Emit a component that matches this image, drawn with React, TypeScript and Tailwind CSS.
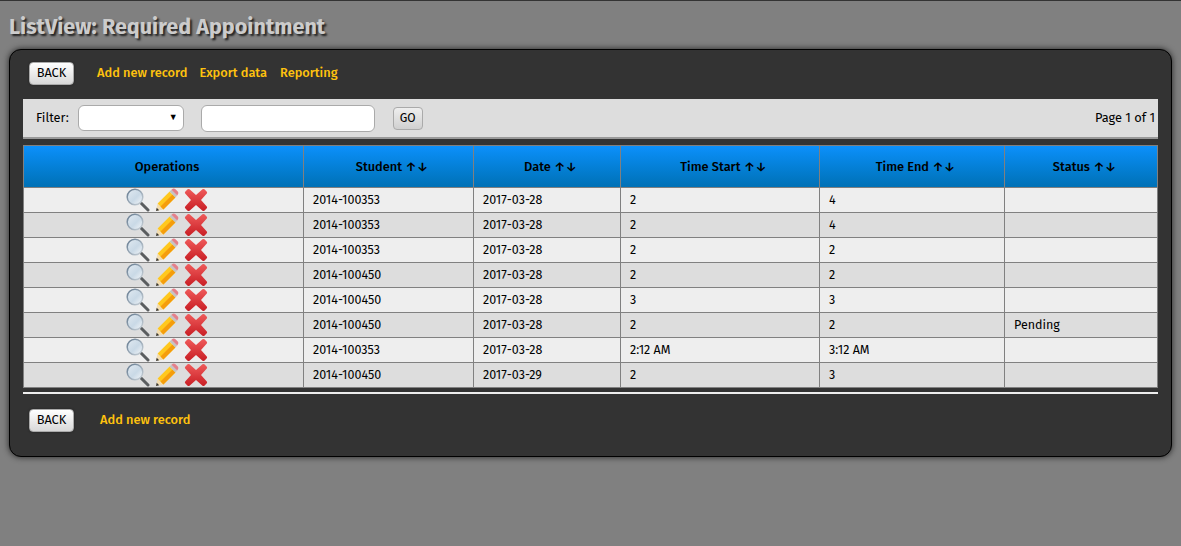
const font = "font-['Fira_Sans','Noto_Sans',sans-serif]";

const rows = [
  ["2014-100353", "2017-03-28", "2", "4", ""],
  ["2014-100353", "2017-03-28", "2", "4", ""],
  ["2014-100353", "2017-03-28", "2", "2", ""],
  ["2014-100450", "2017-03-28", "2", "2", ""],
  ["2014-100450", "2017-03-28", "3", "3", ""],
  ["2014-100450", "2017-03-28", "2", "2", "Pending"],
  ["2014-100353", "2017-03-28", "2:12 AM", "3:12 AM", ""],
  ["2014-100450", "2017-03-29", "2", "3", ""],
];

const columns = [
  { label: "Student", width: "w-[170px]" },
  { label: "Date", width: "w-[147px]" },
  { label: "Time Start", width: "w-[199px]" },
  { label: "Time End", width: "w-[185px]" },
  { label: "Status", width: "w-[153px]" },
];

function SearchIcon() {
  return (
    <svg width="24" height="24" viewBox="0 0 24 24" className="shrink-0">
      <defs>
        <linearGradient id="lens" x1="0" y1="0" x2="1" y2="1">
          <stop offset="0" stopColor="#e2eaf1" />
          <stop offset="0.55" stopColor="#c9d9e6" />
          <stop offset="1" stopColor="#f4f6f8" />
        </linearGradient>
        <linearGradient id="rim" x1="0" y1="0" x2="1" y2="1">
          <stop offset="0" stopColor="#62788e" />
          <stop offset="1" stopColor="#ccd4da" />
        </linearGradient>
      </defs>
      <path d="M15 15 L22 22" stroke="#5a5d5f" strokeWidth="3" strokeLinecap="round" />
      <circle cx="9" cy="9" r="7.8" fill="url(#lens)" stroke="url(#rim)" strokeWidth="1.5" />
    </svg>
  );
}

function PencilIcon() {
  return (
    <svg width="24" height="24" viewBox="0 0 24 24" className="shrink-0">
      <path d="M1 23 L2.6 15.6 L8.4 21.4 Z" fill="#f3dcae" />
      <path d="M1 23 L1.7 19.8 L4.2 22.3 Z" fill="#333" />
      <path d="M2.6 15.6 L14.6 3.6 L20.4 9.4 L8.4 21.4 Z" fill="#ffc81e" />
      <path d="M5.5 18.5 L17.5 6.5 L20.4 9.4 L8.4 21.4 Z" fill="#f59d0c" />
      <path d="M14.6 3.6 L16.4 1.8 L22.2 7.6 L20.4 9.4 Z" fill="#c4c4c4" />
      <path d="M16.4 1.8 L17.8 .7 Q19 0 20.2 .9 L23 3.7 Q23.8 5 23 6.2 L22.2 7.6 Z" fill="#e5808a" />
    </svg>
  );
}

function DeleteIcon() {
  return (
    <svg width="24" height="24" viewBox="0 0 24 24" className="shrink-0">
      <defs>
        <linearGradient id="cross" x1="0" y1="0" x2="0" y2="1">
          <stop offset="0" stopColor="#ef5a5a" />
          <stop offset="1" stopColor="#c81e24" />
        </linearGradient>
      </defs>
      <path
        d="M5.5 1.2 L12 7 L18.5 1.2 Q19.5 .6 20.4 1.3 L22.8 3.8 Q23.5 4.7 22.8 5.6 L17 12 L22.8 18.4 Q23.5 19.3 22.8 20.2 L20.4 22.7 Q19.5 23.4 18.5 22.8 L12 17 L5.5 22.8 Q4.5 23.4 3.6 22.7 L1.2 20.2 Q.5 19.3 1.2 18.4 L7 12 L1.2 5.6 Q.5 4.7 1.2 3.8 L3.6 1.3 Q4.5 .6 5.5 1.2 Z"
        fill="url(#cross)"
      />
    </svg>
  );
}

function BackButton() {
  return (
    <button className="w-[45px] h-[23px] rounded border border-[#aaa] bg-gradient-to-b from-white to-[#d8d8d8] text-[12.8px] font-normal text-black shadow-[0_0_2px_#222]">
      BACK
    </button>
  );
}

export default function App() {
  return (
    <div className={`${font} min-h-[546px] border-t border-[#333] bg-[#808080] overflow-hidden`}>
      <h1 className="h-[48px] pl-[9px] pt-[11px] text-[21.6px] leading-[30px] font-bold text-[#ccc] [text-shadow:2px_2px_2px_#222]">
        ListView: Required Appointment
      </h1>

      <div className="mx-[9px] w-[1163px] h-[408px] rounded-xl border border-black bg-[#333] px-[13px] shadow-[0_0_6px_#222]">
        <div className="flex items-center h-[49px] pl-[6px] pb-[3px] text-[12.8px] font-medium text-[#ffc20e]">
          <BackButton />
          <a className="ml-[23px]">Add new record</a>
          <a className="ml-[12px]">Export data</a>
          <a className="ml-[13px]">Reporting</a>
        </div>

        <div className="flex items-center h-[40px] border-b-2 border-[#999] bg-[#ddd] pl-[13px] pr-[3px] text-[12.8px] text-black">
          <span>Filter:</span>
          <div className="relative ml-[9px] w-[106px] h-[26px] rounded-md border border-[#aaa] bg-white">
            <span className="absolute right-[5px] top-[5px] text-[9px]">▼</span>
          </div>
          <input className="ml-[17px] w-[174px] h-[27px] rounded-md border border-[#aaa] bg-white" />
          <button className="ml-[18px] w-[30px] h-[23px] rounded border border-[#aaa] bg-gradient-to-b from-[#eee] to-[#d0d0d0] text-[12px]">
            GO
          </button>
          <span className="ml-auto">Page 1 of 1</span>
        </div>

        <table className="mt-[6px] w-[1134px] table-fixed border-collapse text-[12.5px] text-black">
          <thead>
            <tr className="h-[42px] bg-gradient-to-b from-[#0c90fb] to-[#0070b4] text-[12.8px]">
              <th className="w-[280px] border border-[#808080] pl-[7px] font-medium">Operations</th>
              {columns.map((c) => (
                <th key={c.label} className={`${c.width} border border-[#808080] pl-[7px] font-medium`}>
                  {c.label} ↑↓
                </th>
              ))}
            </tr>
          </thead>
          <tbody>
            {rows.map((row, i) => (
              <tr key={i} className={`h-[25px] ${i % 2 ? "bg-[#ddd]" : "bg-[#eee]"}`}>
                <td className="border border-[#808080] p-0">
                  <div className="flex justify-center gap-[5px] pl-[7px]">
                    <SearchIcon />
                    <PencilIcon />
                    <DeleteIcon />
                  </div>
                </td>
                {row.map((cell, j) => (
                  <td key={j} className="border border-[#808080] pl-[9px] pr-[8px] py-0">
                    {cell}
                  </td>
                ))}
              </tr>
            ))}
          </tbody>
        </table>

        <div className="mt-[4px] h-[2px] bg-[#eee]" />

        <div className="flex items-center h-[52px] pl-[6px] text-[12.8px] font-medium text-[#ffc20e]">
          <BackButton />
          <a className="ml-[26px]">Add new record</a>
        </div>
      </div>
    </div>
  );
}
